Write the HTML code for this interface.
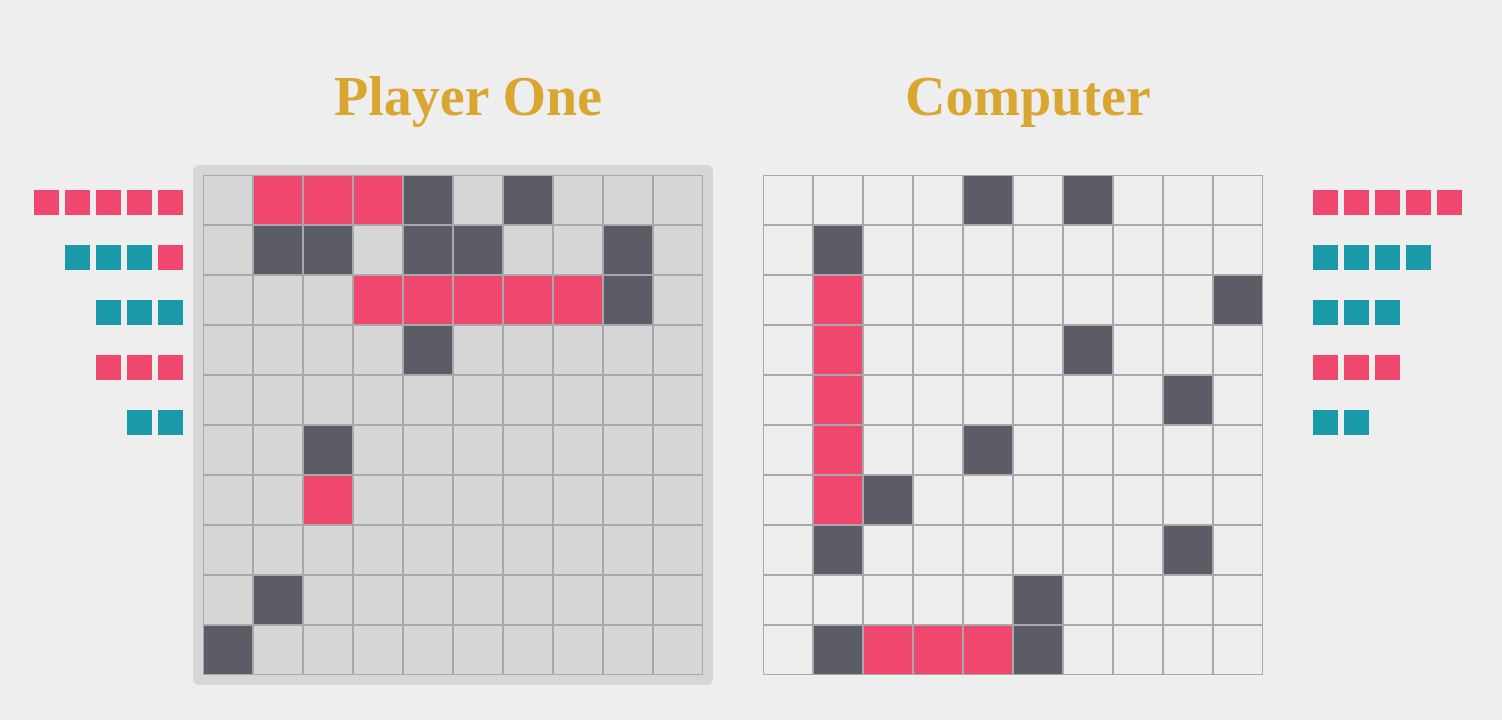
<!DOCTYPE html>
<html><head><meta charset="utf-8"><style>
body{margin:0;width:1502px;height:720px;background:#eeeeee;position:relative;overflow:hidden;font-family:"Liberation Serif",serif}
.t{position:absolute;top:65px;font-size:56px;font-weight:bold;color:#d9a632;line-height:normal;white-space:nowrap}
.panel{position:absolute;left:193px;top:165px;width:520px;height:520px;background:#d6d6d6;border-radius:6px}
.c{position:absolute;width:50px;height:50px;box-sizing:border-box;border:1px solid #a9a9ab}
.s{position:absolute;width:25px;height:25px}
</style></head><body>
<div class="t" style="left:334px">Player One</div>
<div class="t" style="left:905px">Computer</div>
<div class="panel"></div>
<div id="g"></div>
<script>
var P=["EPPPDEDEEE","EDDEDDEEDE","EEEPPPPPDE","EEEEDEEEEE","EEEEEEEEEE","EEDEEEEEEE","EEPEEEEEEE","EEEEEEEEEE","EDEEEEEEEE","DEEEEEEEEE"];
var C=["EEEEDEDEEE","EDEEEEEEEE","EPEEEEEEED","EPEEEEDEEE","EPEEEEEEDE","EPEEDEEEEE","EPDEEEEEEE","EDEEEEEEDE","EEEEEDEEEE","EDPPPDEEEE"];
var col={P:"#f0476f",D:"#5c5c66"};
var h="";
function grid(g,x0,base){for(var r=0;r<10;r++)for(var c=0;c<10;c++){var k=g[r][c];h+='<div class="c" style="left:'+(x0+c*50)+'px;top:'+(175+r*50)+'px;background:'+(col[k]||base)+'"></div>';}}
grid(P,203,"#d6d6d6");grid(C,763,"#eeeeee");
var pk="#f0476f",tl="#1a9aa8";
var L=[[pk,pk,pk,pk,pk],[tl,tl,tl,pk],[tl,tl,tl],[pk,pk,pk],[tl,tl]];
var R=[[pk,pk,pk,pk,pk],[tl,tl,tl,tl],[tl,tl,tl],[pk,pk,pk],[tl,tl]];
for(var i=0;i<5;i++){var y=190+i*55;
for(var j=0;j<L[i].length;j++){var x=158-(L[i].length-1-j)*31;h+='<div class="s" style="left:'+x+'px;top:'+y+'px;background:'+L[i][j]+'"></div>';}
for(var j=0;j<R[i].length;j++){h+='<div class="s" style="left:'+(1313+j*31)+'px;top:'+y+'px;background:'+R[i][j]+'"></div>';}}
document.getElementById("g").innerHTML=h;
</script>
</body></html>
